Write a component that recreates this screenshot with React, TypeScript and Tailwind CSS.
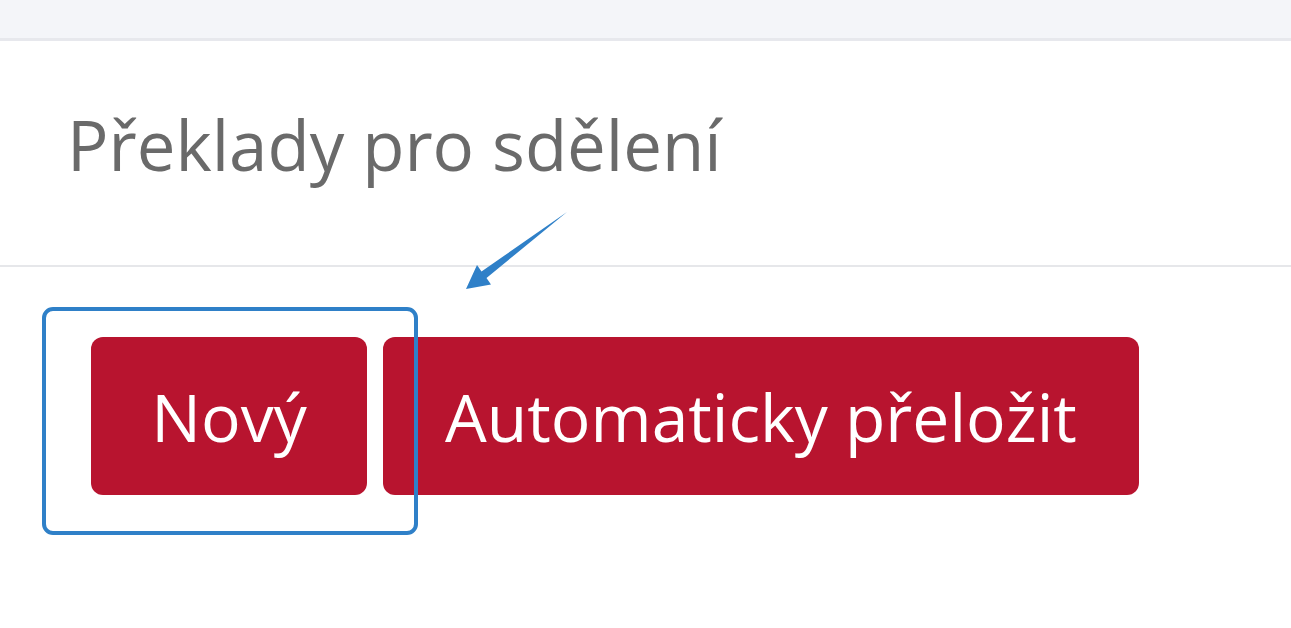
const App = () => {
  return (
    <div className="relative w-[1291px] h-[628px] bg-white overflow-hidden font-['Open_Sans',sans-serif]">
      {/* Top bar */}
      <div className="h-[41px] bg-[#f4f5f9] border-b-[3px] border-[#e7e8ed]" />

      {/* Title */}
      <div className="h-[226px] flex items-center pl-[67px] border-b-2 border-[#e6e7ea]">
        <h1 className="text-[69px] leading-none text-[#6a6a6a] mt-[-18px]">Překlady pro sdělení</h1>
      </div>

      {/* Buttons */}
      <div className="flex gap-4 pl-[91px] pt-[70px]">
        <button className="h-[158px] w-[276px] rounded-xl bg-[#b8142f] text-white text-[66px]">Nový</button>
        <button className="h-[158px] w-[756px] rounded-xl bg-[#b8142f] text-white text-[66px]">Automaticky přeložit</button>
      </div>

      {/* Annotation: highlight box */}
      <div className="absolute left-[42px] top-[307px] w-[376px] h-[228px] rounded-[11px] border-4 border-[#2f80c8]" />

      {/* Annotation: arrow */}
      <svg className="absolute left-0 top-0" width="1291" height="628">
        <polygon
          points="567,212 486.5,278 491,284.5 466,289 477,265 481.5,271.5"
          fill="#2f80c8"
        />
      </svg>
    </div>
  );
};

export default App;
